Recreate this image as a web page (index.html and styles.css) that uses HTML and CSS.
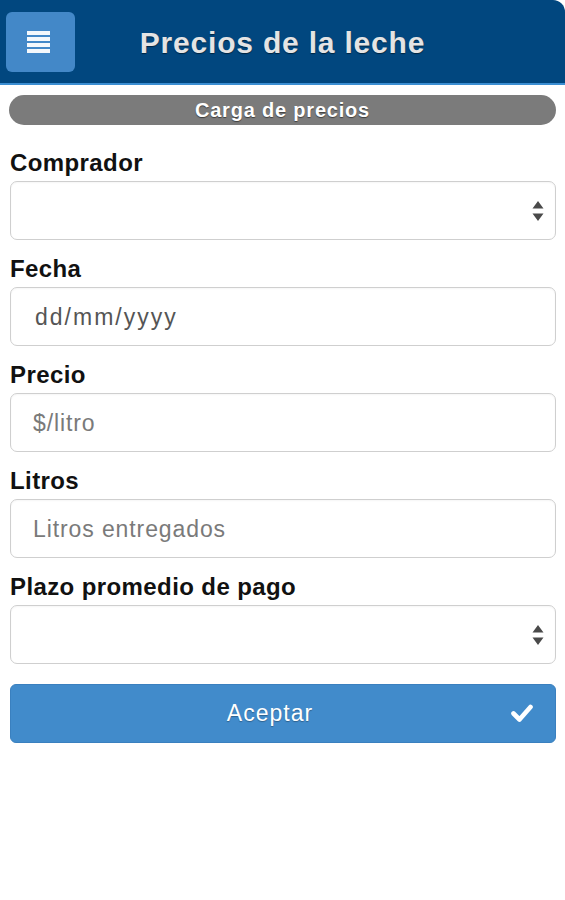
FILE: index.html
```html
<!DOCTYPE html>
<html lang="es">
<head>
<meta charset="utf-8">
<title>Precios de la leche</title>
<link rel="stylesheet" href="styles.css">
</head>
<body>
<header class="topbar">
  <button class="menu-btn" type="button" aria-label="Menú">
    <span class="bars"><i></i><i></i><i></i><i></i></span>
  </button>
  <h1 class="title">Precios de la leche</h1>
</header>
<main class="content">
  <div class="pill">Carga de precios</div>
  <form class="form">
    <div class="field">
      <label class="label">Comprador</label>
      <div class="control select">
        <span class="arrows"><svg width="12" height="22" viewBox="0 0 12 22"><path d="M6 1 L11.5 8.5 H0.5 Z M6 21 L11.5 13.5 H0.5 Z" fill="#4a4a4a"/></svg></span>
      </div>
    </div>
    <div class="field">
      <label class="label">Fecha</label>
      <div class="control"><span class="ph ph-date">dd/mm/yyyy</span></div>
    </div>
    <div class="field">
      <label class="label">Precio</label>
      <div class="control"><span class="ph">$/litro</span></div>
    </div>
    <div class="field">
      <label class="label">Litros</label>
      <div class="control"><span class="ph">Litros entregados</span></div>
    </div>
    <div class="field">
      <label class="label">Plazo promedio de pago</label>
      <div class="control select">
        <span class="arrows"><svg width="12" height="22" viewBox="0 0 12 22"><path d="M6 1 L11.5 8.5 H0.5 Z M6 21 L11.5 13.5 H0.5 Z" fill="#4a4a4a"/></svg></span>
      </div>
    </div>
    <button class="submit" type="button">
      <span class="submit-text">Aceptar</span>
      <svg class="check" width="22" height="20" viewBox="0 0 22 20"><path d="M2.5 10.5 L8.5 16.5 L19.5 4" fill="none" stroke="#fff" stroke-width="4.6" stroke-linecap="round" stroke-linejoin="round"/></svg>
    </button>
  </form>
</main>
</body>
</html>
```
FILE: styles.css
```css
* { box-sizing: border-box; }
html, body { margin: 0; padding: 0; background: #fff; }
body {
  font-family: "Liberation Sans", Arial, Helvetica, sans-serif;
  color: #111;
}
.topbar {
  height: 85px;
  background: #01477f;
  border-top-right-radius: 12px;
  border-bottom: 2px solid #3b8ed2;
  display: flex;
  align-items: center;
  padding: 0 0 1px 6px;
  position: relative;
}
.menu-btn {
  width: 69px;
  height: 60px;
  border: none;
  border-radius: 6px;
  background: #4388c8;
  display: flex;
  align-items: center;
  justify-content: center;
  padding: 0;
  margin-top: 2px;
}
.bars {
  display: flex;
  flex-direction: column;
  gap: 2px;
  width: 23px;
  margin-left: -4px;
}
.bars i {
  display: block;
  height: 4px;
  background: #f4f8fc;
}
.title {
  flex: 1;
  margin: 3px 0 0 0;
  text-align: center;
  font-size: 30px;
  letter-spacing: 0.8px;
  font-weight: bold;
  color: #e4e4e4;
  text-shadow: 0 1px 1px rgba(0,0,0,0.5);
  padding-right: 75px;
}
.content {
  padding: 10px 9px 0 10px;
}
.pill {
  height: 30px;
  border-radius: 16px;
  background: #7b7b7b;
  color: #fff;
  font-weight: bold;
  font-size: 20px;
  letter-spacing: 0.8px;
  text-align: center;
  line-height: 30px;
  text-shadow: 0 1px 1px rgba(0,0,0,0.5);
  margin-left: -1px;
}
.form {
  display: flex;
  flex-direction: column;
  padding-top: 24px;
}
.field {
  display: flex;
  flex-direction: column;
  margin-bottom: 15px;
}
.label {
  font-size: 24px;
  letter-spacing: 0.4px;
  font-weight: bold;
  line-height: 26px;
  padding-top: 1px;
  margin-bottom: 5px;
  color: #111;
}
.control {
  height: 59px;
  border: 1px solid #cfcfcf;
  border-radius: 7px;
  background: #fff;
  display: flex;
  align-items: center;
  padding: 0 22px;
  box-shadow: inset 0 1px 2px rgba(0,0,0,0.04);
}
.select { justify-content: flex-end; padding-right: 11px; }
.arrows { display: flex; }
.ph {
  font-size: 23px;
  letter-spacing: 0.9px;
  color: #7a7a7a;
  margin-top: 1px;
}
.ph-date { color: #555; margin-left: 2px; letter-spacing: 2px; }
.submit {
  margin-top: 5px;
  height: 59px;
  border: 1px solid #3a80bf;
  border-radius: 6px;
  background: #418bcb;
  position: relative;
  display: flex;
  align-items: center;
  justify-content: center;
  padding: 0 26px 0 0;
  font-family: inherit;
}
.submit-text {
  color: #fff;
  font-size: 23px;
  letter-spacing: 1px;
  text-shadow: 0 1px 1px rgba(0,0,0,0.3);
}
.check {
  position: absolute;
  right: 22px;
  top: 18px;
}
```
